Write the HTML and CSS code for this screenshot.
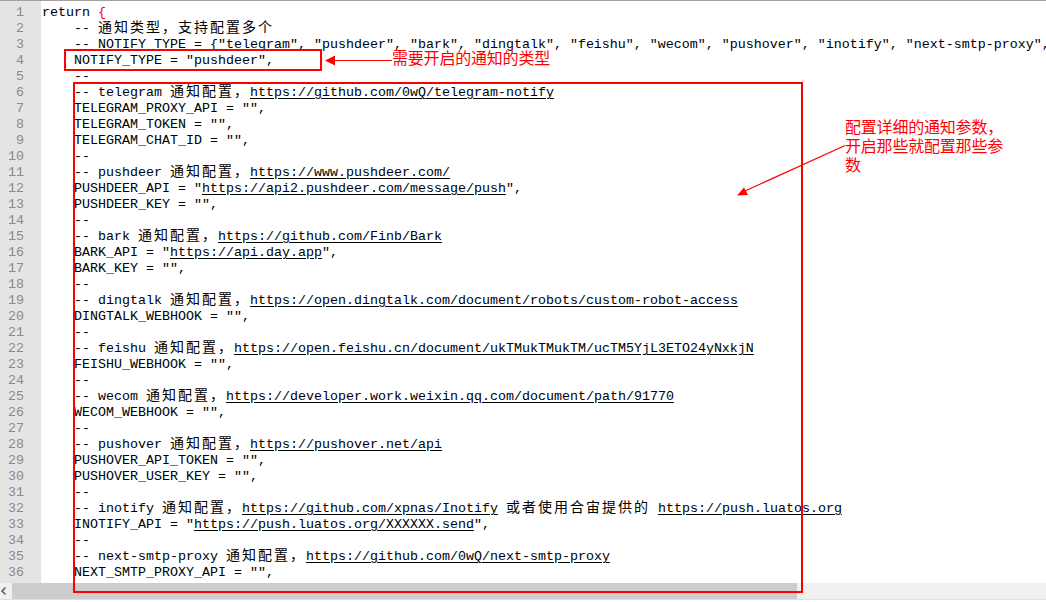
FILE: index.html
```html
<!DOCTYPE html>
<html>
<head>
<meta charset="utf-8">
<link rel="stylesheet" href="styles.css">
</head>
<body>
<div class="screen">
  <div class="editor">
    <div class="gutter">
      <div>1</div><div>2</div><div>3</div><div>4</div><div>5</div><div>6</div><div>7</div><div>8</div><div>9</div><div>10</div><div>11</div><div>12</div><div>13</div><div>14</div><div>15</div><div>16</div><div>17</div><div>18</div><div>19</div><div>20</div><div>21</div><div>22</div><div>23</div><div>24</div><div>25</div><div>26</div><div>27</div><div>28</div><div>29</div><div>30</div><div>31</div><div>32</div><div>33</div><div>34</div><div>35</div><div>36</div>
    </div>
    <div class="code">
<div class="ln">return <span class="brace">{</span></div>
<div class="ln">    -- <span class="cjk">通知类型，支持配置多个</span></div>
<div class="ln">    -- NOTIFY_TYPE = {"telegram", "pushdeer", "bark", "dingtalk", "feishu", "wecom", "pushover", "inotify", "next-smtp-proxy",</div>
<div class="ln">    NOTIFY_TYPE = "pushdeer",</div>
<div class="ln">    --</div>
<div class="ln">    -- telegram <span class="cjk">通知配置，</span><span class="u">https://github.com/0wQ/telegram-notify</span></div>
<div class="ln">    TELEGRAM_PROXY_API = "",</div>
<div class="ln">    TELEGRAM_TOKEN = "",</div>
<div class="ln">    TELEGRAM_CHAT_ID = "",</div>
<div class="ln">    --</div>
<div class="ln">    -- pushdeer <span class="cjk">通知配置，</span><span class="u">https://www.pushdeer.com/</span></div>
<div class="ln">    PUSHDEER_API = "<span class="u">https://api2.pushdeer.com/message/push</span>",</div>
<div class="ln">    PUSHDEER_KEY = "",</div>
<div class="ln">    --</div>
<div class="ln">    -- bark <span class="cjk">通知配置，</span><span class="u">https://github.com/Finb/Bark</span></div>
<div class="ln">    BARK_API = "<span class="u">https://api.day.app</span>",</div>
<div class="ln">    BARK_KEY = "",</div>
<div class="ln">    --</div>
<div class="ln">    -- dingtalk <span class="cjk">通知配置，</span><span class="u">https://open.dingtalk.com/document/robots/custom-robot-access</span></div>
<div class="ln">    DINGTALK_WEBHOOK = "",</div>
<div class="ln">    --</div>
<div class="ln">    -- feishu <span class="cjk">通知配置，</span><span class="u">https://open.feishu.cn/document/ukTMukTMukTM/ucTM5YjL3ETO24yNxkjN</span></div>
<div class="ln">    FEISHU_WEBHOOK = "",</div>
<div class="ln">    --</div>
<div class="ln">    -- wecom <span class="cjk">通知配置，</span><span class="u">https://developer.work.weixin.qq.com/document/path/91770</span></div>
<div class="ln">    WECOM_WEBHOOK = "",</div>
<div class="ln">    --</div>
<div class="ln">    -- pushover <span class="cjk">通知配置，</span><span class="u">https://pushover.net/api</span></div>
<div class="ln">    PUSHOVER_API_TOKEN = "",</div>
<div class="ln">    PUSHOVER_USER_KEY = "",</div>
<div class="ln">    --</div>
<div class="ln">    -- inotify <span class="cjk">通知配置，</span><span class="u">https://github.com/xpnas/Inotify</span> <span class="cjk">或者使用合宙提供的</span> <span class="u">https://push.luatos.org</span></div>
<div class="ln">    INOTIFY_API = "<span class="u">https://push.luatos.org/XXXXXX.send</span>",</div>
<div class="ln">    --</div>
<div class="ln">    -- next-smtp-proxy <span class="cjk">通知配置，</span><span class="u">https://github.com/0wQ/next-smtp-proxy</span></div>
<div class="ln">    NEXT_SMTP_PROXY_API = "",</div>
    </div>
  </div>
  <div class="hscroll">
    <div class="sarrow"><svg width="8" height="16" viewBox="0 0 8 16"><path d="M5.5 4.5 L2 8 L5.5 11.5" fill="none" stroke="#606060" stroke-width="1.6"/></svg></div>
    <div class="thumb"></div>
  </div>
  <div class="bottomline"></div>

  <div class="box box-type"></div>
  <div class="box box-params"></div>
  <div class="note note-type">需要开启的通知的类型</div>
  <div class="note note-params">配置详细的通知参数，<br>开启那些就配置那些参<br>数</div>
  <svg class="arrows" width="1046" height="602" viewBox="0 0 1046 602">
    <line x1="334" y1="60.5" x2="392" y2="60.5" stroke="#ff0000" stroke-width="1"/>
    <polygon points="325,60.5 335,55.5 335,65.5" fill="#ff0000"/>
    <line x1="845" y1="145.5" x2="745" y2="191" stroke="#ff0000" stroke-width="1.2"/>
    <polygon points="737,195.5 744,187.5 748,195" fill="#ff0000"/>
  </svg>
</div>
</body>
</html>
```
FILE: styles.css
```css
html, body {
  margin: 0;
  padding: 0;
  background: #ffffff;
}

.screen {
  position: relative;
  width: 1046px;
  height: 602px;
  overflow: hidden;
  background: #ffffff;
}

.editor {
  display: flex;
  height: 582px;
  border-top: 1px solid #a0a0a0;
  overflow: hidden;
}

.gutter {
  width: 41px;
  flex: none;
  background: #e4e4e4;
  padding-top: 4px;
  box-sizing: border-box;
}

.gutter div {
  width: 24px;
  height: 16px;
  line-height: 16px;
  text-align: right;
  font-family: "Liberation Mono", monospace;
  font-size: 13.333px;
  color: #8a8a8a;
}

.code {
  flex: 1;
  padding-top: 4px;
  padding-left: 1px;
  overflow: hidden;
}

.ln {
  height: 16px;
  line-height: 16px;
  white-space: pre;
  font-family: "Liberation Mono", monospace;
  font-size: 13.333px;
  color: #000000;
}

.brace {
  color: #ff0000;
}

.cjk {
  font-family: "Noto Sans CJK SC", sans-serif;
  font-size: 14px;
  letter-spacing: 2px;
  line-height: 0;
}

.u {
  text-decoration: underline;
  text-underline-offset: 2px;
}

.hscroll {
  display: flex;
  height: 16px;
  background: #f0f0f0;
}

.sarrow {
  width: 12px;
  flex: none;
  display: flex;
  align-items: center;
}

.sarrow svg {
  display: block;
}

.thumb {
  width: 785px;
  height: 16px;
  background: #cdcdcd;
}

.bottomline {
  height: 1px;
  background: #e0e0e0;
}

.box {
  position: absolute;
  border: 2px solid #ff0000;
  box-sizing: border-box;
}

.box-type {
  left: 64px;
  top: 49px;
  width: 258px;
  height: 22px;
}

.box-params {
  left: 73px;
  top: 82px;
  width: 730px;
  height: 511px;
}

.note {
  position: absolute;
  color: #ff0000;
  font-family: "Noto Sans CJK SC", sans-serif;
  font-size: 16px;
  letter-spacing: -0.2px;
  white-space: nowrap;
}

.note-type {
  left: 392px;
  top: 48px;
  line-height: 19px;
}

.note-params {
  left: 845px;
  top: 117px;
  line-height: 19px;
}

.arrows {
  position: absolute;
  left: 0;
  top: 0;
  pointer-events: none;
}
```
